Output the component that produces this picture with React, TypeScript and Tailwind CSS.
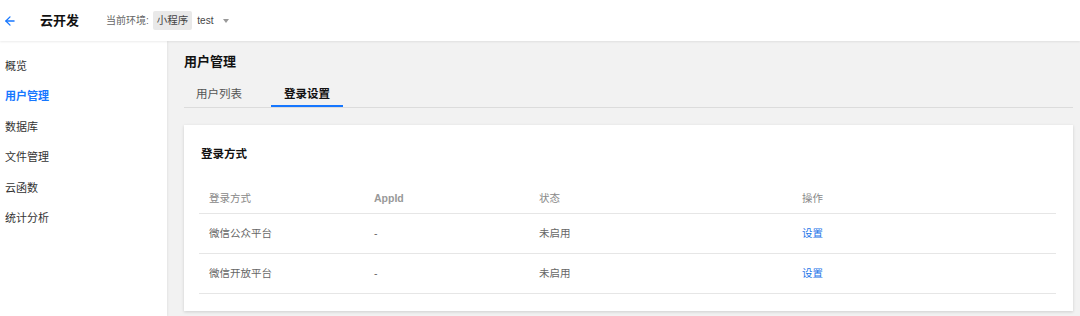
import { ArrowLeft } from "lucide-react";

const navItems = ["概览", "用户管理", "数据库", "文件管理", "云函数", "统计分析"];

const rows = [
  { name: "微信公众平台", appId: "-", status: "未启用" },
  { name: "微信开放平台", appId: "-", status: "未启用" },
];

export default function App() {
  return (
    <div className="flex h-[316px] w-[1080px] flex-col overflow-hidden bg-[#f2f2f2] font-['Liberation_Sans','Noto_Sans_CJK_SC',sans-serif] text-[#333]">
      {/* top bar */}
      <header className="relative z-20 flex h-[41px] shrink-0 items-center bg-white shadow-[0_1px_2px_rgba(0,0,0,0.08)]">
        <ArrowLeft className="ml-[3px] h-[14px] w-[14px] text-[#1677ff]" strokeWidth={2.2} />
        <span className="ml-[23px] text-[13px] font-bold text-[#111]">云开发</span>
        <span className="ml-[27px] text-[10px] text-[#666]">当前环境:</span>
        <span className="ml-[4px] rounded-[2px] bg-[#e9e9e9] px-[4px] py-[2px] text-[10.5px] text-[#444]">小程序</span>
        <span className="ml-[5px] text-[10px] text-[#444]">test</span>
        <span className="ml-[10px] h-0 w-0 border-x-[3.5px] border-t-[4px] border-x-transparent border-t-[#999]" />
      </header>

      <div className="flex flex-1">
        {/* sidebar */}
        <aside className="relative z-10 w-[167px] shrink-0 bg-white pt-[10px] shadow-[1px_0_2px_rgba(0,0,0,0.06)]">
          {navItems.map((item) => (
            <div
              key={item}
              className={[
                "flex h-[30.4px] items-center pl-[5px] text-[11px]",
                item === "用户管理" ? "font-bold text-[#1677ff]" : "text-[#333]",
              ].join(" ")}
            >
              {item}
            </div>
          ))}
        </aside>

        {/* main */}
        <main className="flex-1 pl-[17px] pr-[7px] pt-[12px]">
          <h1 className="text-[13px] font-bold leading-[18px] text-[#111]">用户管理</h1>

          <div className="mt-[13px] flex gap-[17px] border-b border-[#dcdcdc]">
            <div className="px-[12px] pb-[3px] text-[11.5px] leading-[20px] text-[#555]">用户列表</div>
            <div className="border-b-2 border-[#1677ff] px-[13px] pb-[1px] text-[11.5px] font-bold leading-[20px] text-[#111]">
              登录设置
            </div>
          </div>

          <section className="mt-[17px] bg-white pb-[17px] pl-[15px] pr-[17px] pt-[20px] shadow-[0_1px_3px_rgba(0,0,0,0.15)]">
            <h2 className="pl-[2px] text-[11.5px] font-bold leading-[18px] text-[#111]">登录方式</h2>

            <div className="mt-[22px] text-[10.5px]">
              <div className="grid h-[29px] grid-cols-[165px_165px_263px_1fr] items-center border-b border-[#e6e6e6] text-[#888]">
                <div className="pl-[10px]">登录方式</div>
                <div className="pl-[10px] font-bold text-[#999]">AppId</div>
                <div className="pl-[10px]">状态</div>
                <div className="pl-[10px]">操作</div>
              </div>
              {rows.map((row) => (
                <div
                  key={row.name}
                  className="grid h-[40px] grid-cols-[165px_165px_263px_1fr] items-center border-b border-[#e6e6e6] text-[#666]"
                >
                  <div className="pl-[10px]">{row.name}</div>
                  <div className="pl-[10px]">{row.appId}</div>
                  <div className="pl-[10px]">{row.status}</div>
                  <div className="pl-[10px] text-[#1a73e8]">设置</div>
                </div>
              ))}
            </div>
          </section>
        </main>
      </div>
    </div>
  );
}
